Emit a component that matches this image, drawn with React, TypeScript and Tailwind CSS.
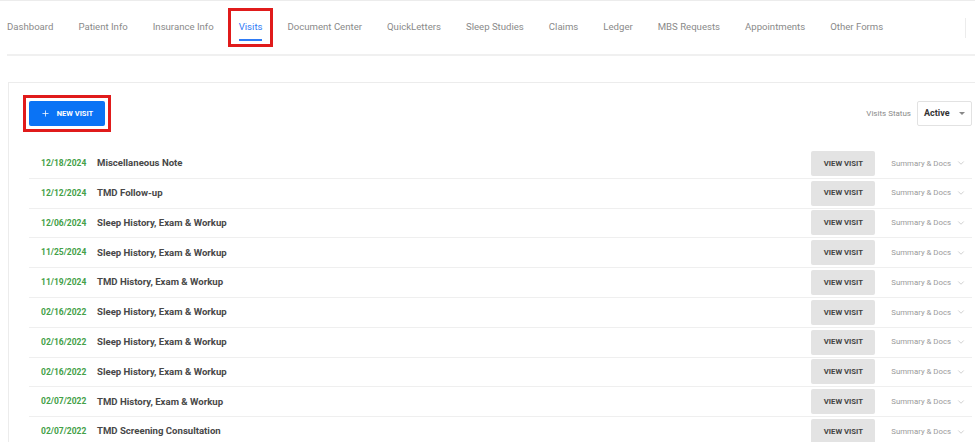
import React from 'react';
import { Plus, ChevronDown } from 'lucide-react';

const tabs = [
  'Dashboard',
  'Patient Info',
  'Insurance Info',
  'Visits',
  'Document Center',
  'QuickLetters',
  'Sleep Studies',
  'Claims',
  'Ledger',
  'MBS Requests',
  'Appointments',
  'Other Forms',
];

const visits = [
  { date: '12/18/2024', title: 'Miscellaneous Note' },
  { date: '12/12/2024', title: 'TMD Follow-up' },
  { date: '12/06/2024', title: 'Sleep History, Exam & Workup' },
  { date: '11/25/2024', title: 'Sleep History, Exam & Workup' },
  { date: '11/19/2024', title: 'TMD History, Exam & Workup' },
  { date: '02/16/2022', title: 'Sleep History, Exam & Workup' },
  { date: '02/16/2022', title: 'Sleep History, Exam & Workup' },
  { date: '02/16/2022', title: 'Sleep History, Exam & Workup' },
  { date: '02/07/2022', title: 'TMD History, Exam & Workup' },
  { date: '02/07/2022', title: 'TMD Screening Consultation' },
];

const App: React.FC = () => {
  return (
    <div className="w-[975px] h-[442px] overflow-hidden bg-white font-['Roboto',sans-serif] border-t border-[#ececec]">
      {/* Tabs */}
      <div className="ml-[7px] h-[55px] border-b-2 border-[#f0f0f0] flex items-center">
        <nav className="flex items-center gap-[25px] flex-1">
          {tabs.map(tab =>
            tab === 'Visits' ? (
              <div
                key={tab}
                className="relative -mx-[11px] px-[8px] h-[39px] border-[3px] border-[#e01b1b] flex items-center"
              >
                <span className="relative text-[9.6px] text-[#2f7bf5]">
                  {tab}
                  <span className="absolute left-0 right-0 -bottom-[6px] h-[2px] bg-[#2f7bf5]" />
                </span>
              </div>
            ) : (
              <span key={tab} className="text-[9.6px] text-[#8a8a8a]">
                {tab}
              </span>
            )
          )}
        </nav>
        <div className="w-px h-[20px] bg-[#ececec] mr-[9px]" />
      </div>

      {/* Card */}
      <div className="mt-[26px] ml-[8px] border-t border-l border-[#ececec] pl-[14px] pt-[12px]">
        <div className="flex items-center justify-between pr-[3px]">
          <div className="border-[3px] border-[#e01b1b] p-[3px]">
            <button className="w-[76px] h-[25px] bg-[#0a73f5] rounded-[2px] flex items-center justify-center gap-[7px] text-white text-[7.5px] font-bold">
              <Plus className="w-[9px] h-[9px]" strokeWidth={2} />
              NEW VISIT
            </button>
          </div>
          <div className="flex items-center gap-[6px]">
            <span className="text-[8px] text-[#8a8a8a]">Visits Status</span>
            <div className="w-[55px] h-[25px] border border-[#e2e2e2] rounded-[2px] flex items-center justify-between pl-[6px] pr-[6px]">
              <span className="text-[9px] font-bold text-[#333]">Active</span>
              <span className="w-0 h-0 border-l-[3px] border-r-[3px] border-t-[3px] border-l-transparent border-r-transparent border-t-[#888]" />
            </div>
          </div>
        </div>

        {/* Visit list */}
        <div className="mt-[17px] ml-[6px] mr-[3px]">
          {visits.map((v, i) => (
            <div key={i} className="h-[29.8px] border-b border-[#efefef] flex items-center">
              <span className="w-[68px] shrink-0 pl-[12px] text-[8.5px] font-bold text-[#43a047]">{v.date}</span>
              <span className="flex-1 text-[9.6px] font-bold text-[#484848]">{v.title}</span>
              <button className="w-[64px] h-[25px] bg-[#e3e3e3] rounded-[2px] text-[7.7px] font-bold text-[#444]">
                VIEW VISIT
              </button>
              <span className="ml-[16px] text-[7.8px] text-[#9a9a9a]">Summary &amp; Docs</span>
              <ChevronDown className="ml-[5px] mr-[6px] w-[10px] h-[10px] text-[#b5b5b5]" strokeWidth={1.5} />
            </div>
          ))}
        </div>
      </div>
    </div>
  );
};

export default App;
